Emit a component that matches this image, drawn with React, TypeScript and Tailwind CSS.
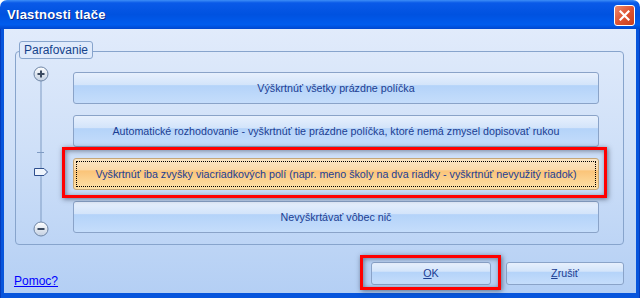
import { type ReactNode } from 'react';

const font = "font-['Liberation_Sans','Noto_Sans',sans-serif]";

function BlueButton({ children, className = '' }: { children: ReactNode; className?: string }) {
  return (
    <div
      className={`flex items-center justify-center rounded-[3px] border border-[#8aa3c8] bg-[linear-gradient(to_bottom,#e7f0fd_0%,#d3e4fa_40%,#b4d3f9_42%,#c5ddfb_100%)] text-[10.7px] text-[#1b3d92] ${className}`}
    >
      {children}
    </div>
  );
}

function Slider() {
  return (
    <svg width="57" height="192" viewBox="0 0 57 192" className="shrink-0">
      <defs>
        <linearGradient id="knob" x1="0" y1="0" x2="0" y2="1">
          <stop offset="0" stopColor="#ffffff" />
          <stop offset="1" stopColor="#c3d0e2" />
        </linearGradient>
      </defs>
      <line x1="25" y1="22" x2="25" y2="177" stroke="#7f9bc3" strokeWidth="1" />
      <line x1="21" y1="100.5" x2="28" y2="100.5" stroke="#7f9bc3" strokeWidth="1" />
      <circle cx="25" cy="22" r="7" fill="url(#knob)" stroke="#6f86a6" />
      <path d="M21.5 22h7M25 18.5v7" stroke="#3b4a60" strokeWidth="2" />
      <path d="M18.5 116.5h9.5l3.5 3.5-3.5 3.5h-9.5z" fill="#eef4fc" stroke="#2e4f8e" />
      <circle cx="25" cy="177" r="7" fill="url(#knob)" stroke="#6f86a6" />
      <path d="M21.5 177h7" stroke="#3b4a60" strokeWidth="2" />
    </svg>
  );
}

export default function App() {
  return (
    <div className={`w-[640px] h-[298px] flex flex-col bg-white ${font}`}>
      {/* title bar */}
      <div className="h-[29px] shrink-0 flex items-center justify-between rounded-t-[7px] bg-[linear-gradient(to_bottom,#3d8ef7_0%,#0a5ae8_10%,#0052e0_50%,#005cee_85%,#0047cf_100%)] pl-[7px] pr-[5px]">
        <span className="text-[13px] font-bold text-white [text-shadow:1px_1px_0_#0a2a8a] tracking-[0.2px]">
          Vlastnosti tlače
        </span>
        <div className="w-[21px] h-[21px] mt-[2px] rounded-[3px] border border-white bg-[linear-gradient(135deg,#ed8a6c_0%,#df5433_50%,#c93e1c_100%)] flex items-center justify-center">
          <svg width="11" height="11" viewBox="0 0 11 11">
            <path d="M1.5 1.5l8 8M9.5 1.5l-8 8" stroke="white" strokeWidth="2.2" strokeLinecap="square" />
          </svg>
        </div>
      </div>

      {/* frame */}
      <div className="flex-1 flex flex-col bg-[linear-gradient(to_right,#00229e_0px,#0755dc_1px,#0755dc_calc(100%-1px),#00229e_100%)] px-[4px] pb-[5px]">
        <div className="flex-1 flex flex-col bg-[linear-gradient(to_bottom,#e1ebfb_0%,#cfe0f8_45%,#b4cff4_100%)]">
          {/* group box */}
          <div className="relative mt-[22px] ml-[11px] mr-[12px] h-[194px] rounded-[4px] border border-[#87a4cc] flex">
            <div className="absolute left-[3px] top-[-11px] h-[18px] px-[4px] flex items-center rounded-[3px] border border-[#87a4cc] bg-[#dfeafb] text-[12px] text-[#15428b]">
              Parafovanie
            </div>
            <Slider />
            <div className="w-[526px] pt-[20px] flex flex-col gap-[11px]">
              <BlueButton className="h-[32px]">Výškrtnúť všetky prázdne políčka</BlueButton>
              <BlueButton className="h-[32px]">
                Automatické rozhodovanie - vyškrtnúť tie prázdne políčka, ktoré nemá zmysel dopisovať rukou
              </BlueButton>
              <div className="relative h-[32px]">
                <div className="h-full p-[2px] rounded-[3px] border border-[#c5a677] bg-[linear-gradient(to_bottom,#fbe6c6_0%,#fbd9a9_35%,#fbc479_40%,#fde1a8_100%)]">
                  <div className="h-full flex items-center justify-center border border-dotted border-black text-[10.7px] text-[#1b3d92]">
                    Vyškrtnúť iba zvyšky viacriadkových polí (napr. meno školy na dva riadky - vyškrtnúť nevyužitý riadok)
                  </div>
                </div>
                <div className="absolute -left-[11px] -right-[8px] -top-[11px] -bottom-[8px] border-[3px] border-[#ff0000] shadow-[1px_1px_5px_rgba(40,50,70,0.65),inset_1px_1px_5px_rgba(40,50,70,0.55)]" />
              </div>
              <BlueButton className="h-[32px]">Nevyškrtávať vôbec nič</BlueButton>
            </div>
          </div>

          {/* bottom row */}
          <div className="flex-1 flex items-start justify-between pl-[10px] pr-[12px]">
            <a className="mt-[29px] text-[12px] text-[#0000ff] underline leading-[14px]">Pomoc?</a>
            <div className="mt-[17px] flex gap-[15px]">
              <div className="relative">
                <BlueButton className="w-[120px] h-[23px]">
                  <span>
                    <span className="underline">O</span>K
                  </span>
                </BlueButton>
                <div className="absolute -left-[11px] -right-[10px] -top-[7px] -bottom-[5px] border-[3px] border-[#ff0000] shadow-[1px_1px_5px_rgba(40,50,70,0.65),inset_1px_1px_5px_rgba(40,50,70,0.55)]" />
              </div>
              <BlueButton className="w-[118px] h-[23px]">
                <span>
                  <span className="underline">Z</span>rušiť
                </span>
              </BlueButton>
            </div>
          </div>
        </div>
      </div>
    </div>
  );
}
